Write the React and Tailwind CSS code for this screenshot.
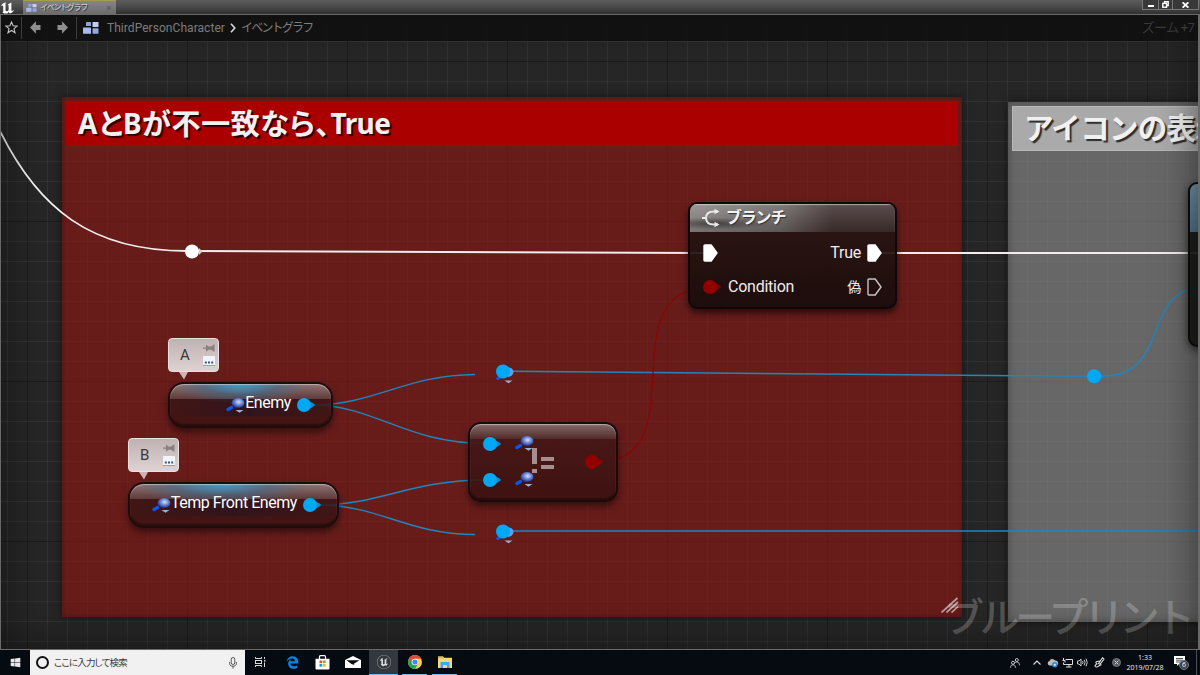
import React from 'react';
import { FaWindows } from 'react-icons/fa';
import { FaEdgeLegacy } from 'react-icons/fa6';
import { SiUnrealengine } from 'react-icons/si';

const JP = "font-[Roboto,'Noto_Sans_CJK_JP',sans-serif]";

function GraphIcon({ className }) {
  return (
    <svg className={className} viewBox="0 0 16 12">
      <rect x="3" y="0" width="5" height="4" rx="0.6" fill="#8fa3d8" />
      <rect x="9.5" y="0" width="6" height="5" rx="0.6" fill="#c3cdee" />
      <rect x="0" y="5.5" width="8" height="6.3" rx="0.6" fill="#a9b9ec" />
      <rect x="9.5" y="6.3" width="6" height="5.5" rx="0.6" fill="#93a6e2" />
    </svg>
  );
}

function TitleBar() {
  return (
    <header className="h-[14px] flex items-start bg-linear-to-b from-[#5c5c5c] via-[#4a4a4a] to-[#303030] overflow-hidden">
      <div className="w-[23px] h-[14px] flex items-center shrink-0 pl-px pt-px">
        <svg className="w-[14px] h-[12px]" viewBox="0 0 14 12" fill="#fff">
          <path d="M0 4.200C0.800 2 2.600 0.700 5.200 0.500C4.600 1 4.500 1.500 4.500 2.300V8.300C4.500 9.300 6.300 9.500 7.600 8.400V3.200L6.700 2.500L10.400 0.500V8.200C10.400 9.200 11.600 9.200 13.200 7.800C12.300 9.800 10.800 11 8.800 11.400L7.700 10.100L6.300 11.600C4.400 11.600 2.500 11.400 1.300 10.400C2 10.300 2.200 9.900 2.200 9.200V4.300C2.200 3.200 1.200 3 0 4.200Z" />
        </svg>
      </div>
      <div className="w-[93px] h-[14px] flex items-center border-t border-[#a89a4e] bg-linear-to-b from-[#858585] to-[#6c6c6c] pl-[3px] pr-[5px]">
        <GraphIcon className="w-[11px] h-[8px]" />
        <span className={`${JP} ml-[3px] text-[8px] leading-none tracking-[-1.300px] text-[#d4d4d4] whitespace-nowrap [text-shadow:1px_1px_0_#333]`}>
          イベントグラフ
        </span>
        <span className="ml-auto text-[8px] leading-none text-[#4d4d4d]">×</span>
      </div>
      <div className="ml-auto mr-px flex h-[10px] border border-t-0 border-[#777] bg-[#383838]">
        <div className="w-[16px] flex items-center justify-center border-r border-[#777]">
          <span className="w-[6px] h-[2px] bg-white mt-[3px]" />
        </div>
        <div className="w-[14px] flex items-center justify-center border-r border-[#777]">
          <svg className="w-[7px] h-[7px]" viewBox="0 0 7 7" fill="none" stroke="#fff" strokeWidth="1.4">
            <path d="M2.5 2V0.8H6.2V4.5H5" />
            <rect x="0.8" y="2.4" width="3.8" height="3.8" />
          </svg>
        </div>
        <div className="w-[25px] flex items-center justify-center">
          <svg className="w-[7px] h-[6px]" viewBox="0 0 7 6" stroke="#fff" strokeWidth="1.8">
            <path d="M0.6 0.3L6.4 5.7M6.4 0.3L0.6 5.7" />
          </svg>
        </div>
      </div>
    </header>
  );
}

function Breadcrumb() {
  return (
    <nav className="relative h-[26px] flex items-center bg-[#0f0f0f]/90 pb-px">
      <div className="w-[21px] h-[22px] flex items-center border-r border-[#3c3c3c] pl-[4px]">
        <svg className="w-[13px] h-[13px]" viewBox="0 0 13 13" fill="none" stroke="#c4c4c4" strokeWidth="1.1">
          <path d="M6.5 1L8.1 4.8L12.1 5.1L9 7.7L10 11.7L6.5 9.5L3 11.7L4 7.7L0.9 5.1L4.9 4.8Z" />
        </svg>
      </div>
      <div className="w-[55px] h-[22px] flex items-center gap-[16px] border-r border-[#3c3c3c] pl-[8px]">
        <svg className="w-[11px] h-[13px]" viewBox="0 0 11 13" fill="#8d8d8d">
          <path d="M0 6.5L6 0.3V4H10.5V9H6V12.7Z" />
        </svg>
        <svg className="w-[11px] h-[13px]" viewBox="0 0 11 13" fill="#8d8d8d">
          <path d="M11 6.5L5 0.3V4H0.5V9H5V12.7Z" />
        </svg>
      </div>
      <GraphIcon className="w-[16px] h-[12px] ml-[6px]" />
      <span className="font-[Roboto] ml-[8px] w-[118px] text-[12px] leading-none tracking-[0.050px] text-[#7d7d7d]">ThirdPersonCharacter</span>
      <svg className="w-[6px] h-[10px] ml-[5px]" viewBox="0 0 6 10" fill="none" stroke="#d8d8d8" strokeWidth="1.6">
        <path d="M1 0.7L4.8 5L1 9.3" />
      </svg>
      <span className={`${JP} ml-[5px] text-[12px] leading-none tracking-[-1.800px] text-[#7d7d7d]`}>イベントグラフ</span>
      <span className={`${JP} ml-auto mr-[4px] text-[13px] leading-none tracking-[-0.700px] pb-px text-[#383838]`}>ズーム +7</span>
    </nav>
  );
}

function ExecPin({ hollow }) {
  return (
    <svg className="w-[15px] h-[18px] shrink-0" viewBox="0 0 15 18">
      <path
        d="M2 1H8.2L14 9L8.2 17H2Q1 17 1 16V2Q1 1 2 1Z"
        fill={hollow ? 'none' : '#fff'}
        stroke={hollow ? '#c8c4c4' : '#fff'}
        strokeWidth="1.4"
        strokeLinejoin="round"
      />
    </svg>
  );
}

function DataPin({ color }) {
  return (
    <svg className="w-[19px] h-[14px] shrink-0" viewBox="0 0 19 14">
      <path d="M13 3.6Q16 5 18.3 7Q16 9 13 10.4Z" fill={color} opacity="0.8" />
      <circle cx="7" cy="7" r="7" fill={color} />
    </svg>
  );
}

function RefIcon() {
  return (
    <svg className="w-[19px] h-[15px] shrink-0" viewBox="0 0 19 15">
      <defs>
        <radialGradient id="lens" cx="0.55" cy="0.4" r="0.6">
          <stop offset="0" stopColor="#d5e2ff" />
          <stop offset="0.5" stopColor="#6c88d2" />
          <stop offset="1" stopColor="#1d3290" />
        </radialGradient>
      </defs>
      <path d="M2 11.5L5.500 9.500" stroke="#0b55f0" strokeWidth="3.200" strokeLinecap="round" />
      <ellipse cx="12" cy="5" rx="6.4" ry="4.9" fill="url(#lens)" />
      <path d="M9.5 12H17.5L13.5 14.8Z" fill="#9fb0d2" />
    </svg>
  );
}

// reroute-style pin with the reference glyph peeking out from behind
function RefPin({ className }) {
  return (
    <svg className={`absolute w-[20px] h-[20px] ${className}`} viewBox="0 0 20 20">
      <path d="M1.5 15L6 13" stroke="#0b55f0" strokeWidth="3" />
      <ellipse cx="12.500" cy="8" rx="6" ry="4.800" fill="#5f9fe6" />
      <circle cx="8" cy="7.5" r="7" fill="#00a8f6" />
      <path d="M9.5 16.5H17.5L13.5 19.3Z" fill="#9fb0d2" />
    </svg>
  );
}

function Wires() {
  return (
    <svg className="absolute inset-0 w-full h-full" viewBox="1 15 1197 634" fill="none">
      <g stroke="#f1eded" strokeWidth="1.8">
        <path d="M-2 127C38 210 92 251 187 251" />
        <path d="M192 251L703 253" />
        <path d="M880 253H1200" />
      </g>
      <g stroke="#1f86bf" strokeWidth="1.4">
        <path d="M312 405C375 405 405 375 475 374.5" />
        <path d="M312 405C375 405 405 443.500 486 443.500" />
        <path d="M318 505C380 505 410 480 486 480" />
        <path d="M318 505C380 505 405 534 475 534.500" />
        <path d="M510 371.300L1090 376.300" />
        <path d="M510 531H1200" />
        <path d="M1103 376C1172 376 1140 288 1204 287" />
      </g>
      <path d="M597 462C700 462 605 287 711 287" stroke="#8f0303" strokeWidth="1.2" />
      <circle cx="192" cy="251.500" r="7" fill="#fff" />
      <path d="M199 248L202.500 251.500L199 255Z" fill="#d8cccc" />
      <path d="M1099 372.500L1105 376.300L1099 380Z" fill="#0a8fd2" />
      <circle cx="1094" cy="376.300" r="7" fill="#00a8f6" />
    </svg>
  );
}

function Bubble({ label, className }) {
  return (
    <div className={`absolute w-[51px] h-[34px] flex items-center rounded-[4px] border border-[#eadfdf] bg-linear-to-b from-[#c0b2b2] to-[#dfd2d2] pl-[11px] pr-[3px] ${className}`}>
      <span className="font-[Roboto] text-[15px] leading-none text-[#3d3636]">{label}</span>
      <div className="ml-auto flex flex-col items-center gap-[4px]">
        <svg className="w-[12px] h-[8px]" viewBox="0 0 12 8" fill="#8b8080">
          <path d="M0 3.500H3V0.500L5.500 2.500H8L11.500 0V8L8 5.700H5.500L3 7.700V4.700H0Z" />
        </svg>
        <svg className="w-[12px] h-[11px]" viewBox="0 0 12 11">
          <path d="M1 0H11Q12 0 12 1V9H5L3 11V9H0V1Q0 0 1 0Z" fill="#f1f4f8" />
          <path d="M1.800 6.500H3.800M5 6.500H7M8.200 6.500H10.200" stroke="#35587c" strokeWidth="2" />
          <path d="M0 9.500H12" stroke="#86a5c4" />
        </svg>
      </div>
      <svg className="absolute left-[10px] top-[33px] w-[9px] h-[8px]" viewBox="0 0 9 8">
        <path d="M0 0H9L5 7.500Z" fill="#ddd0d0" opacity="0.85" />
      </svg>
    </div>
  );
}

function VariableNode({ label, className }) {
  return (
    <div className={`absolute h-[46px] rounded-[16px] border-2 border-[#1c0c0b] bg-linear-to-b from-[#3a1615]/85 to-[#3c1312]/85 shadow-[0_4px_7px_rgba(0,0,0,0.5)] overflow-hidden ${className}`}>
      <div className="absolute inset-x-0 top-0 h-[15px] bg-linear-to-b from-[#a08d8c]/80 to-[#6d4a49]/70" />
      <div className="absolute inset-x-0 top-0 h-[32px] bg-[radial-gradient(ellipse_42%_62%_at_44%_0%,rgba(63,158,204,0.95),rgba(50,110,150,0.5)_55%,transparent)]" />
      <div className="absolute inset-x-0 top-[15px] h-[17px] bg-linear-to-r from-transparent via-[#2a1420]/75 to-transparent" />
      <div className="absolute inset-0 rounded-[14px] shadow-[inset_0_1px_1px_rgba(235,220,220,0.55),inset_0_-2px_1px_rgba(20,5,5,0.5)]" />
      <div className="relative h-full flex items-center justify-end pr-[15px]">
        <RefIcon />
        <span className="font-[Roboto] text-[16px] leading-none tracking-[-0.450px] text-white pb-[4px] mr-[6px] whitespace-nowrap">{label}</span>
        <DataPin color="#00a8f6" />
      </div>
    </div>
  );
}

function BranchNode() {
  return (
    <div className="absolute left-[687px] top-[187px] w-[209px] h-[107px] rounded-[9px] border-2 border-[#100808] bg-linear-to-b from-[#271615]/90 to-[#190c0b]/95 shadow-[0_4px_7px_rgba(0,0,0,0.6)] overflow-hidden">
      <div className="relative h-[28px] flex items-center bg-linear-to-r from-[#8d8887] via-[#6b6564] via-45% to-[#3f302f] to-70% pl-[12px] shadow-[inset_0_1px_1px_rgba(230,220,220,0.6)]">
        <div className="absolute inset-0 bg-[radial-gradient(ellipse_at_12%_70%,rgba(40,36,36,0.65),transparent_22%),linear-gradient(to_bottom,rgba(255,255,255,0.14),rgba(0,0,0,0.15))]" />
        <svg className="relative w-[18px] h-[20px]" viewBox="0 0 18 20" fill="none" stroke="#e8e8e8" strokeWidth="1.9">
          <path d="M0 10H4M16 3.500H12C6 3.500 4 6.500 4 10C4 13.500 6 16.500 12 16.500H16" />
          <path d="M12.500 0.800L17.500 3.500L12.500 6.200ZM12.500 13.800L17.500 16.500L12.500 19.200Z" fill="#e8e8e8" stroke="none" />
        </svg>
        <span className={`${JP} relative ml-[6px] text-[16px] font-bold leading-none tracking-[-1.200px] text-[#f2f2f2] [text-shadow:1px_1px_1px_#333]`}>
          ブランチ
        </span>
      </div>
      <div className="pt-[4px] pl-[13px] pr-[13px] font-[Roboto] text-[16px] leading-none tracking-[-0.250px] text-[#f0ecec]">
        <div className="h-[34px] flex items-center justify-between">
          <ExecPin />
          <div className="flex items-center gap-[6px]">
            <span>True</span>
            <ExecPin />
          </div>
        </div>
        <div className="h-[34px] flex items-center justify-between">
          <div className="flex items-center gap-[6px]">
            <DataPin color="#940000" />
            <span>Condition</span>
          </div>
          <div className="flex items-center gap-[6px]">
            <span className={`${JP} text-[14px]`}>偽</span>
            <ExecPin hollow />
          </div>
        </div>
      </div>
    </div>
  );
}

function NotEqualNode() {
  return (
    <div className="absolute left-[467px] top-[407px] w-[150px] h-[80px] rounded-[13px] border-2 border-[#1a0a09] bg-linear-to-b from-[#451817]/90 to-[#3a1110]/90 shadow-[0_4px_7px_rgba(0,0,0,0.5)] overflow-hidden">
      <div className="absolute inset-x-0 top-0 h-[15px] bg-linear-to-b from-[#8a7574]/90 to-[#55302f]/80" />
      <div className="absolute inset-0 rounded-[11px] shadow-[inset_0_1px_1px_rgba(235,220,220,0.55),inset_0_-2px_1px_rgba(20,5,5,0.5)]" />
      <div className="relative h-full flex items-center justify-between pl-[13px] pr-[12px]">
        <div className="flex flex-col pb-[1px]">
          <div className="h-[36px] flex items-center gap-[13px]"><DataPin color="#00a8f6" /><RefIcon /></div>
          <div className="h-[36px] flex items-center gap-[13px]"><DataPin color="#00a8f6" /><RefIcon /></div>
        </div>
        <DataPin color="#940000" />
      </div>
      <div className="absolute left-[62px] top-[24px] flex items-center gap-[4px]" aria-label="!=">
        <div className="flex flex-col gap-[5px]">
          <span className="w-[5px] h-[16px] bg-[#a58f8e]" />
          <span className="w-[5px] h-[4px] bg-[#a58f8e]" />
        </div>
        <div className="flex flex-col gap-[4px] pt-[4px]">
          <span className="w-[13px] h-[4px] bg-[#a58f8e]" />
          <span className="w-[13px] h-[4px] bg-[#a58f8e]" />
        </div>
      </div>
    </div>
  );
}

function CommentBox({ className, headerClass, children }) {
  return (
    <section className={`absolute p-[4px] ${className}`}>
      <h2 className={`h-[45px] flex items-center whitespace-nowrap font-bold text-[#f1f1f1] leading-none [text-shadow:2px_2px_1px_rgba(0,0,0,0.75)] ${headerClass}`}>
        {children}
      </h2>
    </section>
  );
}

function GraphEditor() {
  return (
    <main className="relative h-[636px] border border-[#6a6a6a] border-r-2 bg-[#262626] overflow-hidden">
      {/* Grid: 20px cells with a darker line every 160px */}
      <div className="absolute inset-0 bg-[linear-gradient(to_right,rgba(255,255,255,0.05)_1px,transparent_1px),linear-gradient(to_bottom,rgba(255,255,255,0.05)_1px,transparent_1px)] bg-size-[20px_20px] bg-position-[6px_6px]" />
      <div className="absolute inset-0 bg-[linear-gradient(to_right,rgba(0,0,0,0.42)_1px,transparent_1px),linear-gradient(to_bottom,rgba(0,0,0,0.42)_1px,transparent_1px)] bg-size-[160px_160px] bg-position-[26px_46px]" />

      <CommentBox
        className="left-[61px] top-[82px] w-[900px] h-[520px] bg-[#921512]/60 shadow-[0_0_9px_rgba(0,0,0,0.5),inset_0_0_6px_rgba(0,0,0,0.25)]"
        headerClass="bg-[#aa0000] pl-[12px] pb-[2px] font-['Noto_Sans_CJK_JP',sans-serif] text-[29px]"
      >
        <span className="font-['Noto_Sans',sans-serif] text-[28px] tracking-[-0.5px]">A</span>
        <span className="tracking-[-3px]">と</span>
        <span className="font-['Noto_Sans',sans-serif] text-[28px] tracking-[0.500px]">B</span>
        <span className="[font-feature-settings:'palt'] tracking-[0.600px]">が不一致なら、</span>
        <span className="font-['Noto_Sans',sans-serif] text-[28px] tracking-[-0.600px]">True</span>
      </CommentBox>
      <CommentBox
        className="left-[1007px] top-[87px] w-[400px] h-[520px] bg-[#929292]/60 shadow-[0_0_9px_rgba(0,0,0,0.6),inset_0_0_8px_rgba(0,0,0,0.3)]"
        headerClass="bg-[#aaaaaa] border border-[#b8b8b8] pl-[11px] pb-[3px] font-['Noto_Sans_CJK_JP',sans-serif] text-[29.500px]"
      >
        <span className="tracking-[-0.700px]">アイコンの表示</span>
      </CommentBox>

      <Wires />
      <RefPin className="left-[494px] top-[349px]" />
      <RefPin className="left-[494px] top-[509px]" />
      <Bubble label="A" className="left-[167px] top-[323px]" />
      <Bubble label="B" className="left-[127px] top-[423px]" />
      <VariableNode label="Enemy" className="left-[167px] top-[367px] w-[165px]" />
      <VariableNode label="Temp Front Enemy" className="left-[127px] top-[467px] w-[211px]" />
      <BranchNode />
      <NotEqualNode />
      <div className="absolute left-[1187px] top-[167px] w-[60px] h-[165px] rounded-[9px] border-2 border-[#0c0c0c] bg-[#151713]/90 shadow-[0_3px_8px_rgba(0,0,0,0.6)] overflow-hidden">
        <div className="h-[48px] bg-linear-to-br from-[#6f93a8] to-[#34566c]" />
      </div>

      {/* Resize grip */}
      <svg className="absolute left-[940px] top-[582px] w-[18px] h-[16px]" viewBox="0 0 18 16" stroke="#b9a1a0" strokeWidth="1.7">
        <path d="M0.500 15.500L16.500 1M5.500 15.500L17 5M10.500 15.500L17 9.500" />
      </svg>
      <div className={`${JP} absolute left-[943px] top-[584px] text-[40px] font-medium leading-none tracking-[-4.400px] text-white/22 whitespace-nowrap`}>
        ブループリント
      </div>
      <div className="absolute inset-0 shadow-[inset_0_0_40px_rgba(0,0,0,0.5)]" />
      <Breadcrumb />
    </main>
  );
}

function TaskItem({ active, running, className, children }) {
  return (
    <div className={`h-full flex items-center justify-center border-b ${active ? 'bg-[#33383d]' : ''} ${running ? 'border-[#76b9ed]' : 'border-transparent'} ${className}`}>
      {children}
    </div>
  );
}

function Taskbar() {
  return (
    <footer className="h-[25px] flex items-center bg-[#060a11]">
      <div className="w-[30px] flex justify-center"><FaWindows className="w-[11px] h-[11px] text-[#e8e8e8]" /></div>
      <div className="w-[215px] h-full flex items-center bg-[#f1f1f1] pl-[6px] pr-[8px]">
        <span className="w-[13px] h-[13px] rounded-full border-2 border-[#111]" />
        <span className="ml-[5px] font-['Noto_Sans_CJK_JP',sans-serif] text-[9.500px] leading-none [font-feature-settings:'palt'] tracking-[-0.800px] text-[#3a3a3a] whitespace-nowrap">ここに入力して検索</span>
        <svg className="ml-auto w-[8px] h-[12px]" viewBox="0 0 8 12" fill="none" stroke="#444" strokeWidth="0.9">
          <rect x="2.200" y="0.500" width="3.600" height="7" rx="1.800" />
          <path d="M0.600 5V6.500C0.600 10.200 7.400 10.200 7.400 6.500V5M4 9.300V11.500" />
        </svg>
      </div>
      <TaskItem className="w-[30px]">
        <svg className="w-[11px] h-[10px]" viewBox="0 0 11 10" fill="none" stroke="#dcdcdc">
          <path d="M0.500 0V1.500H6.500V0M0.500 10V8.500H6.500V10M9.500 0V2M9.500 5.500V10" />
          <rect x="0.500" y="3.500" width="6" height="3" />
          <rect x="9" y="3" width="1.500" height="1.500" fill="#dcdcdc" stroke="none" />
        </svg>
      </TaskItem>
      <TaskItem className="w-[34px]"><FaEdgeLegacy className="w-[13px] h-[13px] text-[#0a84e4]" /></TaskItem>
      <TaskItem className="w-[27px]">
        <svg className="w-[15px] h-[15px]" viewBox="0 0 15 15">
          <path d="M4.500 4V1.800Q4.500 0.700 5.500 0.700H9.500Q10.500 0.700 10.500 1.800V4" fill="none" stroke="#fff" strokeWidth="1.200" />
          <path d="M0.500 3.800H14.500V13.500Q14.500 14.500 13.500 14.500H1.500Q0.500 14.500 0.500 13.500Z" fill="#fff" />
          <path d="M4.500 5.500H7.200V8.200H4.500Z" fill="#f25022" />
          <path d="M8 5.500H10.700V8.200H8Z" fill="#7fba00" />
          <path d="M4.500 9H7.200V11.700H4.500Z" fill="#00a4ef" />
          <path d="M8 9H10.700V11.700H8Z" fill="#ffb900" />
        </svg>
      </TaskItem>
      <TaskItem className="w-[33px]">
        <svg className="w-[16px] h-[12px]" viewBox="0 0 16 12">
          <path d="M0 4L8 0L16 4V12H0Z" fill="#fff" />
          <path d="M1.500 4.300H14.500L8.500 8L10 9.300L6.500 8Z" fill="#060a11" />
        </svg>
      </TaskItem>
      <TaskItem active running className="w-[29px]"><SiUnrealengine className="w-[14px] h-[14px] text-[#dcdcdc]" /></TaskItem>
      <TaskItem running className="w-[25px] ml-[4px]">
        <svg className="w-[14px] h-[14px]" viewBox="0 0 14 14">
          <circle cx="7" cy="7" r="7" fill="#ffcd42" />
          <path d="M0.940 3.500A7 7 0 0 0 7 14L10 8.700L4.300 8.500Z" fill="#1da462" />
          <path d="M7 3.800H13.200L13 3.500A7 7 0 0 0 0.940 3.500L4 8.500Z" fill="#e04a3a" />
          <circle cx="7" cy="7" r="3.300" fill="#fff" />
          <circle cx="7" cy="7" r="2.600" fill="#4285f4" />
        </svg>
      </TaskItem>
      <TaskItem running className="w-[25px] ml-[5px]">
        <svg className="w-[14px] h-[12px]" viewBox="0 0 14 12">
          <path d="M0 0.500H5L6.200 1.800H14V12H0Z" fill="#f8d775" />
          <path d="M2.500 6H11.500V12H9V9H5V12H2.500Z" fill="#3fa9e6" />
          <path d="M0 0.500H5L6 2.200H0Z" fill="#e2b440" />
        </svg>
      </TaskItem>

      {/* System tray */}
      <div className="ml-auto flex items-center h-full">
        <svg className="w-[10px] h-[10px]" viewBox="0 0 10 10" fill="none" stroke="#d8d8d8" strokeWidth="0.900">
          <circle cx="6.800" cy="2" r="1.500" />
          <circle cx="3" cy="4.800" r="1.500" />
          <path d="M0.500 9.700C0.500 5.800 5.500 5.800 5.500 9.700M4.800 5C6.500 3 9.500 4 9.500 7.300" />
        </svg>
        <svg className="ml-[13px] w-[8px] h-[5px]" viewBox="0 0 8 5" fill="none" stroke="#e0e0e0" strokeWidth="1.100">
          <path d="M0.500 4.500L4 1L7.500 4.500" />
        </svg>
        <svg className="ml-[6px] w-[11px] h-[10px]" viewBox="0 0 11 10">
          <path d="M2.500 7.500A2.300 2.300 0 0 1 2.500 3A3 3 0 0 1 8 2.500A2.400 2.400 0 0 1 9 7.500Z" fill="#b9bdc2" />
          <circle cx="7.800" cy="6.800" r="2.700" fill="#2388d8" />
          <path d="M6.500 6.800H9.100M7.800 5.500V8.100" stroke="#fff" strokeWidth="0.800" />
        </svg>
        <svg className="ml-[4px] w-[11px] h-[10px]" viewBox="0 0 11 10" fill="none" stroke="#e0e0e0">
          <path d="M3.500 1.500H10.500V6.500H3.500M1.500 0V2.500M0.500 2.500H3V4.500M1.500 4.500V6.500H3.500M4 9H9.500M7 6.500V9" />
        </svg>
        <svg className="ml-[4px] w-[11px] h-[9px]" viewBox="0 0 11 9" fill="none" stroke="#e0e0e0" strokeWidth="0.900">
          <path d="M0.500 3H2L4 1V8L2 6H0.500ZM5.500 3Q6.500 4.500 5.500 6M7.200 1.800Q9 4.500 7.200 7.200M9 0.700Q11.500 4.500 9 8.300" />
        </svg>
        <svg className="ml-[6px] w-[11px] h-[11px]" viewBox="0 0 11 11" fill="none" stroke="#e0e0e0" strokeWidth="1.100">
          <path d="M4.500 6.500L8.500 0.700L10 2L6 7.300ZM6 4L3 4.500C1 5 2 7 3.500 7C1 7 0 10 2.500 10C5 10 5 7.500 7.500 8" />
        </svg>
        <svg className="ml-[7px] w-[9px] h-[9px]" viewBox="0 0 9 9">
          <circle cx="4.500" cy="4.500" r="4" fill="#5a5d61" stroke="#77797d" />
          <path d="M2.700 2.700L6.300 6.300M6.300 2.700L2.700 6.300" stroke="#d0d0d0" />
        </svg>
        <div className="ml-[4px] w-[40px] flex flex-col items-center gap-[3px] font-['Open_Sans',sans-serif] text-[7px] leading-[7px] text-[#f0f0f0]">
          <span>1:33</span>
          <span>2019/07/28</span>
        </div>
        <div className="relative ml-[9px] mr-[8px] w-[14px] h-[14px]">
          <svg className="w-[11px] h-[10px]" viewBox="0 0 11 10">
            <path d="M0 0H11V8H5L3 10V8H0Z" fill="#fff" />
            <path d="M2 2.500H9M2 4.200H9M2 6H7" stroke="#060a11" strokeWidth="0.700" />
          </svg>
          <span className="absolute left-[5px] top-[4px] w-[10px] h-[10px] rounded-full bg-[#3d4248] border border-[#777] flex items-center justify-center font-['Open_Sans'] text-[7px] leading-none text-white">6</span>
        </div>
        <div className="w-[4px] h-full border-l border-[#4a4e54]" />
      </div>
    </footer>
  );
}

export default function App() {
  return (
    <div className="w-[1200px] h-[675px] flex flex-col bg-black overflow-hidden">
      <TitleBar />
      <GraphEditor />
      <Taskbar />
    </div>
  );
}
